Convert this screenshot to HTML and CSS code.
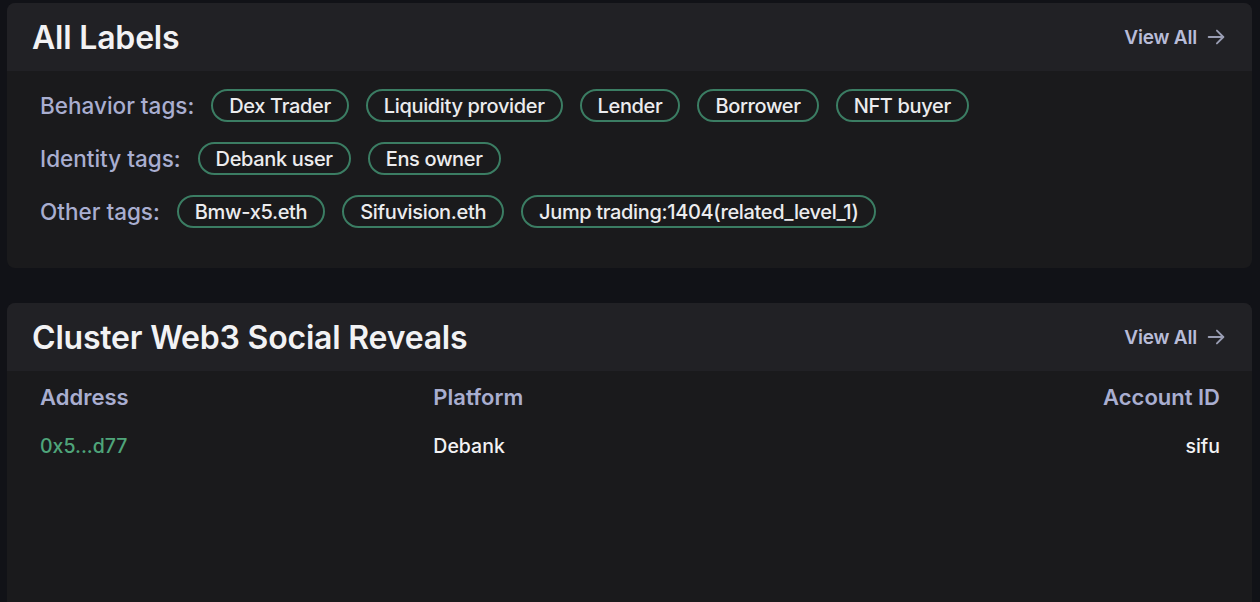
FILE: index.html
```html
<!DOCTYPE html>
<html lang="en">
<head>
    <meta charset="UTF-8">
    <meta name="viewport" content="width=device-width, initial-scale=1.0">
    <title>Wallet Profile</title>
    <link rel="stylesheet" href="styles.css">
</head>
<body>
    <div class="page">
        <section class="card">
            <div class="card-header">
                <h2>All Labels</h2>
                <a class="view-all" href="#">View All
                    <svg width="22" height="22" viewBox="0 0 24 24" fill="none" stroke="currentColor" stroke-width="2" stroke-linecap="round" stroke-linejoin="round"><path d="M4 12h16"/><path d="M13 5l7 7-7 7"/></svg>
                </a>
            </div>
            <div class="card-body labels">
                <div class="tag-row">
                    <span class="tag-label">Behavior tags:</span>
                    <span class="tag">Dex Trader</span>
                    <span class="tag">Liquidity provider</span>
                    <span class="tag">Lender</span>
                    <span class="tag">Borrower</span>
                    <span class="tag">NFT buyer</span>
                </div>
                <div class="tag-row">
                    <span class="tag-label">Identity tags:</span>
                    <span class="tag">Debank user</span>
                    <span class="tag">Ens owner</span>
                </div>
                <div class="tag-row">
                    <span class="tag-label">Other tags:</span>
                    <span class="tag">Bmw-x5.eth</span>
                    <span class="tag">Sifuvision.eth</span>
                    <span class="tag">Jump trading:1404(related_level_1)</span>
                </div>
            </div>
        </section>

        <section class="card card-tall">
            <div class="card-header">
                <h2>Cluster Web3 Social Reveals</h2>
                <a class="view-all" href="#">View All
                    <svg width="22" height="22" viewBox="0 0 24 24" fill="none" stroke="currentColor" stroke-width="2" stroke-linecap="round" stroke-linejoin="round"><path d="M4 12h16"/><path d="M13 5l7 7-7 7"/></svg>
                </a>
            </div>
            <div class="card-body social">
                <div class="social-row social-head">
                    <span>Address</span>
                    <span>Platform</span>
                    <span class="right">Account ID</span>
                </div>
                <div class="social-row">
                    <span class="address">0x5...d77</span>
                    <span>Debank</span>
                    <span class="right">sifu</span>
                </div>
            </div>
        </section>
    </div>
</body>
</html>
```

FILE: styles.css
```css
:root {
    --page-bg: #111217;
    --header-bg: #212125;
    --body-bg: #1a1a1c;
    --text: #f2f2f4;
    --muted: #a9aed0;
    --green: #3b7d63;
    --address: #4fa57a;
}

html, body {
    margin: 0;
    background: var(--page-bg);
    height: 100%;
    overflow: hidden;
}
body {
    font-family: Inter, "Noto Sans", sans-serif;
    color: var(--text);
}
.page {
    padding: 3px 8px 0 7px;
    display: flex;
    flex-direction: column;
    gap: 35px;
}
.card {
    background-color: var(--body-bg);
    border-radius: 8px;
    overflow: hidden;
}
.card-tall {
    min-height: 320px;
}
.card-header {
    height: 68px;
    background-color: var(--header-bg);
    display: flex;
    align-items: center;
    justify-content: space-between;
    padding: 0 25px;
}
.card-header h2 {
    margin: 0;
    font-size: 32px;
    font-weight: 600;
    letter-spacing: -0.2px;
}
.view-all {
    color: #b8bcd8;
    text-decoration: none;
    font-size: 19px;
    font-weight: 600;
    letter-spacing: -0.2px;
    display: flex;
    align-items: center;
    gap: 8px;
}
.view-all svg {
    color: #9a9eb4;
}
.labels {
    padding: 18px 33px 40px;
    display: flex;
    flex-direction: column;
    gap: 20px;
}
.tag-row {
    display: flex;
    align-items: center;
    gap: 17px;
}
.tag-label {
    color: var(--muted);
    font-size: 22.5px;
    font-weight: 500;
}
.tag {
    height: 33px;
    box-sizing: border-box;
    border: 2px solid var(--green);
    border-radius: 17px;
    padding: 0 16px;
    display: flex;
    align-items: center;
    font-size: 20px;
    font-weight: 500;
    color: #ececee;
    letter-spacing: -0.35px;
}
.social {
    padding: 0 32px 0 33px;
}
.social-row {
    display: grid;
    grid-template-columns: repeat(3, 1fr);
    align-items: center;
    height: 48px;
    font-size: 19.5px;
    font-weight: 500;
}
.social-head {
    height: 51px;
    color: var(--muted);
    font-size: 22px;
    font-weight: 600;
}
.social .right {
    text-align: right;
}
.address {
    color: var(--address);
}
```
